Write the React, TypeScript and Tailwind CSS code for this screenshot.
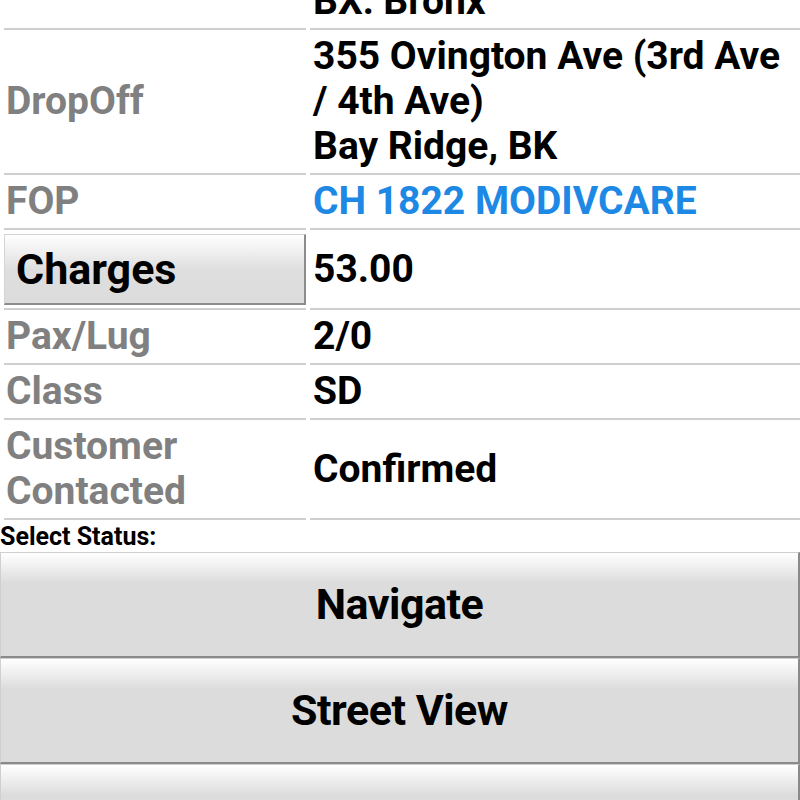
import React from 'react';

const rows = [
  { label: 'PickUp', value: ['1180 Grand Concourse', 'BX: Bronx'] },
  { label: 'DropOff', value: ['355 Ovington Ave (3rd Ave', '/ 4th Ave)', 'Bay Ridge, BK'] },
  { label: 'FOP', value: ['CH 1822 MODIVCARE'], blue: true },
  { label: 'Charges', value: ['53.00'], button: true },
  { label: 'Pax/Lug', value: ['2/0'] },
  { label: 'Class', value: ['SD'] },
  { label: 'Customer Contacted', value: ['Confirmed'] },
];

function BigButton({ text }: { text: string }) {
  return (
    <button className="w-full h-[106px] flex items-center justify-center border border-t-[#cfcfcf] border-l-[#cfcfcf] border-b-2 border-r-2 border-b-[#8a8a8a] border-r-[#8a8a8a] bg-[linear-gradient(to_bottom,#ffffff_0px,#dcdcdc_30px,#dcdcdc_100%)]">
      <span className="inline-block text-[43px] font-bold text-black tracking-[-0.5px]">{text}</span>
    </button>
  );
}

export default function App() {
  return (
    <div className="w-[800px] h-[800px] overflow-hidden bg-white font-['Roboto','Liberation_Sans',sans-serif]">
      {/* trip details */}
      <div className="-mt-[70px]">
        {rows.map((row, i) => (
          <div key={i} className="flex gap-[4px] pl-[4px]">
            <div className={`w-[302px] flex items-center border-b-2 border-[#cfcfcf] ${row.button ? 'pt-[4px] pb-[3px]' : 'py-[4px]'}`}>
              {row.button ? (
                <button className="w-full h-[71px] text-left pl-[11px] border border-t-[#d4d4d4] border-l-[#d4d4d4] border-b-2 border-r-2 border-b-[#8c8c8c] border-r-[#8c8c8c] bg-[linear-gradient(to_bottom,#ffffff_0px,#dedede_35px,#dcdcdc_100%)]">
                  <span className="text-[43px] font-bold text-black leading-[46px]">{row.label}</span>
                </button>
              ) : (
                <span className="pl-[2px] text-[39px] font-bold leading-[45px] text-[#808080]">
                  {row.label === 'Customer Contacted' ? (
                    <>Customer<br />Contacted</>
                  ) : (
                    row.label
                  )}
                </span>
              )}
            </div>
            <div className={`flex-1 flex items-center border-b-2 border-[#cfcfcf] pl-[3px] ${row.button ? 'pt-[4px] pb-[3px]' : 'py-[4px]'}`}>
              <span className={`text-[39px] font-bold leading-[45px] ${row.blue ? 'text-[#1e88e5]' : 'text-black'}`}>
                {row.value.map((v, j) => (
                  <React.Fragment key={j}>
                    {j > 0 && <br />}
                    {v}
                  </React.Fragment>
                ))}
              </span>
            </div>
          </div>
        ))}
      </div>
      <div className="pt-[2px] text-[25px] font-bold leading-[29px] text-black">Select Status:</div>
      <div className="pt-[1px] flex flex-col">
        <BigButton text="Navigate" />
        <BigButton text="Street View" />
        <BigButton text="" />
      </div>
    </div>
  );
}
